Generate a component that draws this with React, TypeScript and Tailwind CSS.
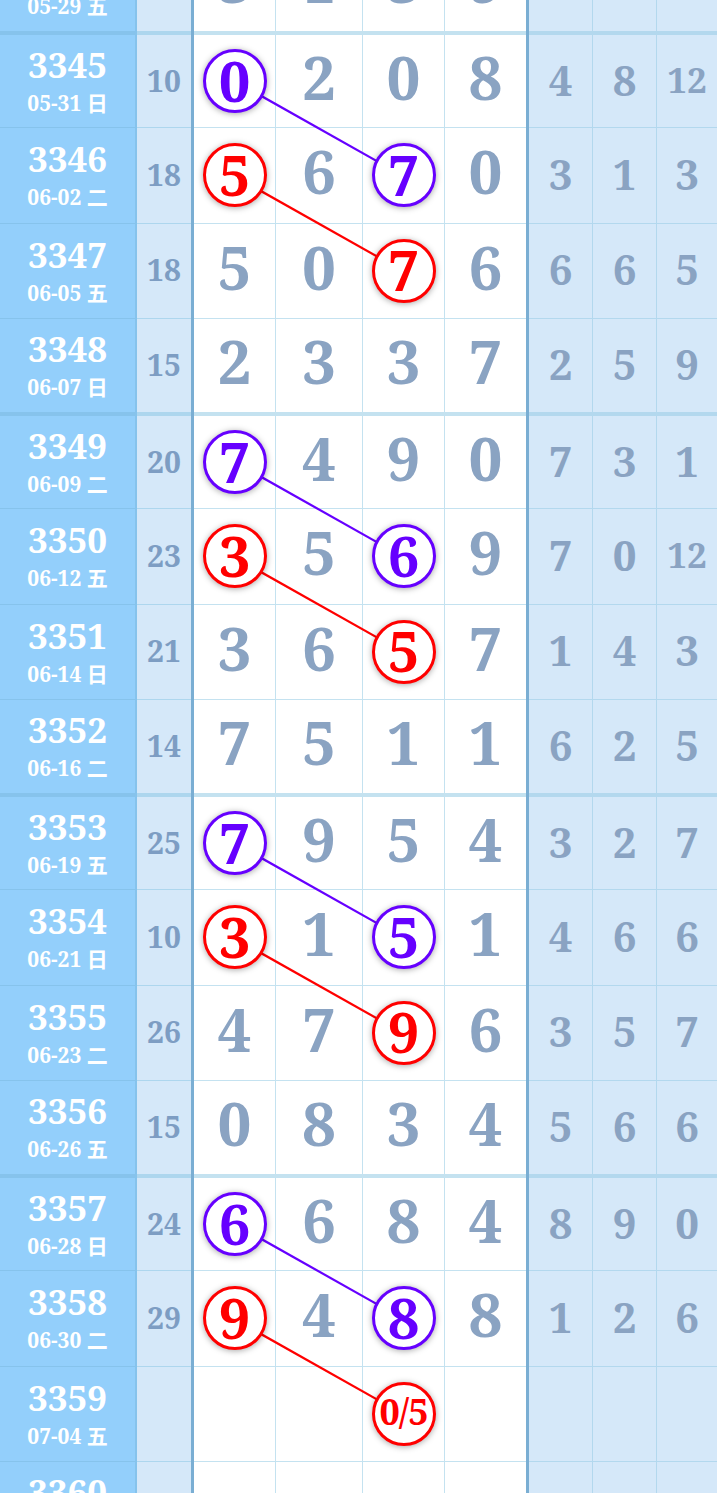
import React from "react";

type Cell = { v: string; c?: "p" | "r" };
type Row = { n: string; d: string; s: string; m: Cell[]; r: string[] };

function parseM(s: string): Cell[] {
  return s.split(" ").map((t) => {
    if (t === "-") return { v: "" };
    if (t.endsWith("p")) return { v: t.slice(0, -1), c: "p" };
    if (t.endsWith("r")) return { v: t.slice(0, -1), c: "r" };
    return { v: t };
  });
}

const raw: [string, string, string, string, string][] = [
  ["3344", "05-29 五", "17", "3 1 3 9", "- - -"],
  ["3345", "05-31 日", "10", "0p 2 0 8", "4 8 12"],
  ["3346", "06-02 二", "18", "5r 6 7p 0", "3 1 3"],
  ["3347", "06-05 五", "18", "5 0 7r 6", "6 6 5"],
  ["3348", "06-07 日", "15", "2 3 3 7", "2 5 9"],
  ["3349", "06-09 二", "20", "7p 4 9 0", "7 3 1"],
  ["3350", "06-12 五", "23", "3r 5 6p 9", "7 0 12"],
  ["3351", "06-14 日", "21", "3 6 5r 7", "1 4 3"],
  ["3352", "06-16 二", "14", "7 5 1 1", "6 2 5"],
  ["3353", "06-19 五", "25", "7p 9 5 4", "3 2 7"],
  ["3354", "06-21 日", "10", "3r 1 5p 1", "4 6 6"],
  ["3355", "06-23 二", "26", "4 7 9r 6", "3 5 7"],
  ["3356", "06-26 五", "15", "0 8 3 4", "5 6 6"],
  ["3357", "06-28 日", "24", "6p 6 8 4", "8 9 0"],
  ["3358", "06-30 二", "29", "9r 4 8p 8", "1 2 6"],
  ["3359", "07-04 五", "", "- - 0/5r -", "- - -"],
  ["3360", "07-07 日", "", "- - - -", "- - -"],
];

const rows: Row[] = raw.map(([n, d, s, m, r]) => ({
  n,
  d,
  s,
  m: parseM(m),
  r: r.split(" ").map((x) => (x === "-" ? "" : x)),
}));

const ROW_H = 95.25;
const XA = 234.5;
const XC = 403.5;

const SERIF = "font-['Noto_Serif','Noto_Sans_CJK_SC',serif] font-bold";

function Circle({ v, c }: { v: string; c: "p" | "r" }) {
  const color =
    c === "p" ? "border-[#6600ff] text-[#6600ff]" : "border-[#ff0000] text-[#ff0000]";
  const size = v.length > 1 ? "text-[36px] tracking-[-1px]" : "text-[56px]";
  return (
    <div
      className={`relative z-20 flex h-[64px] w-[64px] items-center justify-center rounded-full border-[3px] bg-white shadow-[0_1px_6px_rgba(0,0,0,0.35)] ${color}`}
    >
      <span className={`${size} -mt-[3px] leading-none`}>{v}</span>
    </div>
  );
}

export default function App() {
  const lines: { x1: number; y1: number; x2: number; y2: number; c: string }[] = [];
  rows.forEach((row, i) => {
    const a = row.m[0];
    const nxt = rows[i + 1];
    if (a.c && nxt && nxt.m[2].c) {
      lines.push({
        x1: XA,
        y1: i * ROW_H + ROW_H / 2,
        x2: XC,
        y2: (i + 1) * ROW_H + ROW_H / 2,
        c: a.c === "p" ? "#6600ff" : "#ff0000",
      });
    }
  });

  return (
    <div className={`h-[1493px] w-[717px] overflow-hidden bg-white ${SERIF}`}>
      <div className="relative -mt-[62.25px]">
        <svg
          className="pointer-events-none absolute left-0 top-0 z-10"
          width={717}
          height={rows.length * ROW_H}
        >
          {lines.map((l, i) => (
            <line key={i} x1={l.x1} y1={l.y1} x2={l.x2} y2={l.y2} stroke={l.c} strokeWidth={2.2} />
          ))}
        </svg>
        {rows.map((row, i) => {
          const gEnd = (i % 4) === 0;
          const gStart = i > 0 && ((i - 1) % 4) === 0;
          const bt = gStart ? "border-t-2" : "";
          const bb = gEnd ? "border-b-2" : "border-b";
          return (
            <div key={row.n} className="flex h-[95.25px]">
              <div
                className={`flex w-[137px] flex-col items-center justify-center pb-[2px] border-r-2 border-r-[#86c3ec] bg-[#93cffb] text-white ${bt} ${bb} border-t-[#86c3ec] border-b-[#86c3ec]`}
              >
                <div className="text-[35px] leading-[38px]">{row.n}</div>
                <div className="mt-[8px] text-[21px] leading-[22px]">{row.d}</div>
              </div>
              <div
                className={`flex w-[54px] items-center justify-center bg-[#d5e8f9] text-[#7d9dc3] ${bt} ${bb} border-t-[#add6ee] border-b-[#add6ee]`}
              >
                <span className="-mt-[1px] text-[30px] leading-none">{row.s}</span>
              </div>
              <div className="w-[3px] bg-[#7aaed3]" />
              {row.m.map((cell, j) => {
                const w = ["w-[82px]", "w-[87px]", "w-[82px]", "w-[81px]"][j];
                const br = j < 3 ? "border-r border-r-[#c4e2f0]" : "";
                return (
                  <div
                    key={j}
                    className={`flex ${w} items-center justify-center bg-white text-[#8aa3c2] ${br} ${bt} ${bb} border-t-[#c4e2f0] border-b-[#c4e2f0]`}
                  >
                    {cell.c ? (
                      <Circle v={cell.v} c={cell.c} />
                    ) : (
                      <span className="-mt-[8px] text-[60px] leading-none">{cell.v}</span>
                    )}
                  </div>
                );
              })}
              <div className="w-[3px] bg-[#7aaed3]" />
              {row.r.map((v, j) => {
                const w = ["w-[64px]", "w-[64px]", "w-[60px]"][j];
                const br = j < 2 ? "border-r border-r-[#b3d8ee]" : "";
                const fs = v.length > 1 ? "text-[35px]" : "text-[42px]";
                return (
                  <div
                    key={j}
                    className={`flex ${w} items-center justify-center bg-[#d5e8f9] text-[#8aa3c2] ${br} ${bt} ${bb} border-t-[#b3d8ee] border-b-[#b3d8ee]`}
                  >
                    <span className={`${fs} -mt-[3px] leading-none`}>{v}</span>
                  </div>
                );
              })}
            </div>
          );
        })}
      </div>
    </div>
  );
}
